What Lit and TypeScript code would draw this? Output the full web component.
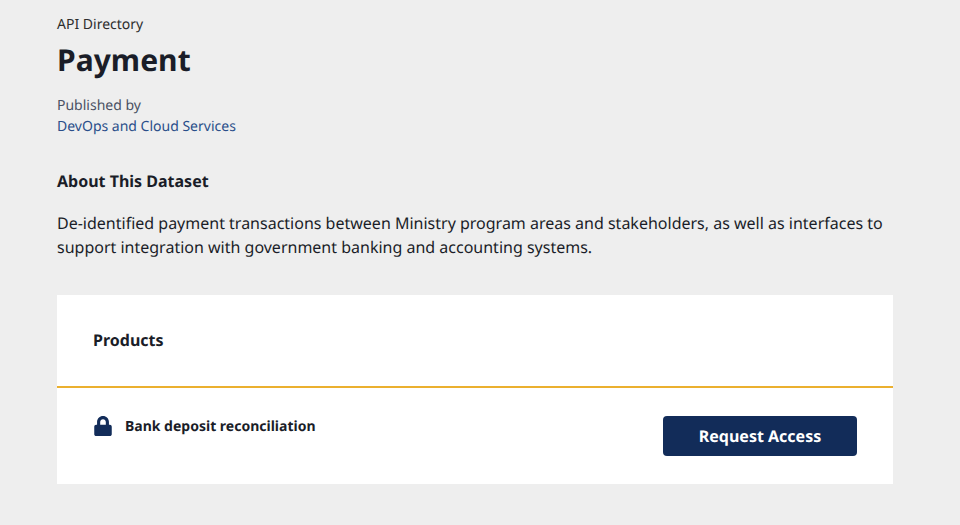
import { LitElement, html, css } from "lit";
import { customElement } from "lit/decorators.js";

@customElement("app-root")
export class AppRoot extends LitElement {
  static styles = css`
    :host { display: block; box-sizing: border-box; min-height: 525px; padding: 14px 67px 0 57px; background: #eeeeee; color: #1a1d28; font-family: "Noto Sans", sans-serif; font-size: 16px; line-height: 24px; text-rendering: geometricPrecision; -webkit-font-smoothing: antialiased; }
    h1, h2, p { margin: 0; }
    .crumb { font-size: 14px; line-height: 21px; color: #2d2d2d; }
    h1 { font-size: 30px; line-height: 40px; margin-top: 5px; font-weight: 700; letter-spacing: 0.04px; }
    .publisher { margin-top: 15px; font-size: 14px; line-height: 21px; color: #4a5163; }
    .publisher a { display: block; color: #2a4e8a; text-decoration: none; }
    h2 { font-size: 16px; line-height: 24px; font-weight: 700; }
    .about { margin-top: 32px; }
    .about p { margin-top: 18px; }
    .card { margin-top: 36px; background: #fff; }
    .head { box-sizing: border-box; height: 93px; padding: 33px 36px 0; border-bottom: 2px solid #ebb02f; }
    .row { display: flex; justify-content: space-between; align-items: flex-start; padding: 28px 36px; }
    .product { display: flex; align-items: flex-start; gap: 12px; font-size: 14px; line-height: 22px; font-weight: 700; }
    svg { display: block; width: 20px; height: 20px; fill: #122c59; }
    button { width: 194px; height: 40px; border: 0; border-radius: 4px; background: #122c59; color: #fff; font: 700 16px/24px "Noto Sans", sans-serif; padding: 0; text-rendering: inherit; }
  `;

  render() {
    return html`
      <div class="crumb">API Directory</div>
      <h1>Payment</h1>
      <div class="publisher">Published by<a href="#">DevOps and Cloud Services</a></div>
      <section class="about">
        <h2>About This Dataset</h2>
        <p>De-identified payment transactions between Ministry program areas and stakeholders, as well as interfaces to support integration with government banking and accounting systems.</p>
      </section>
      <section class="card">
        <div class="head"><h2>Products</h2></div>
        <div class="row">
          <div class="product">
            <svg viewBox="-32 0 512 512"><path d="M400 224h-24v-72C376 68.200 307.800 0 224 0S72 68.200 72 152v72H48c-26.500 0-48 21.500-48 48v192c0 26.500 21.500 48 48 48h352c26.500 0 48-21.500 48-48V272c0-26.500-21.500-48-48-48zm-104 0H152v-72c0-39.700 32.300-72 72-72s72 32.300 72 72v72z"/></svg>
            <span>Bank deposit reconciliation</span>
          </div>
          <button>Request Access</button>
        </div>
      </section>
    `;
  }
}
